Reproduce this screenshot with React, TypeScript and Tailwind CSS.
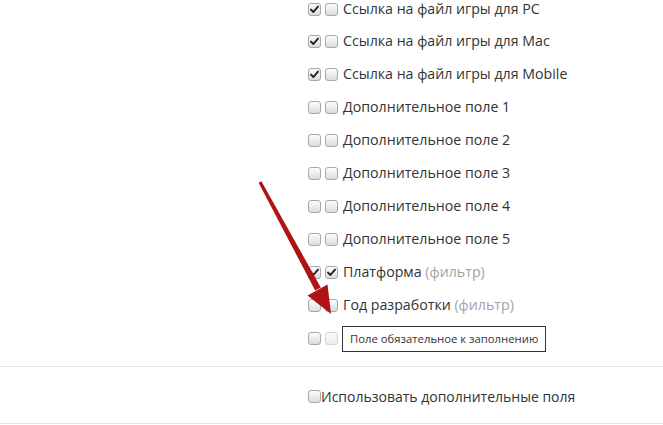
import React from "react";

function Box({ checked = false, light = false }: { checked?: boolean; light?: boolean }) {
  return (
    <span
      className={
        "relative inline-flex h-[13px] w-[13px] shrink-0 items-center justify-center rounded-[3px] border " +
        (light
          ? "border-[#d4d4d4] bg-gradient-to-b from-[#fafafa] to-[#ececec]"
          : "border-[#a8a8a8] bg-gradient-to-b from-[#fdfdfd] to-[#dcdcdc]")
      }
    >
      {checked && (
        <svg width="9" height="9" viewBox="0 0 9 9">
          <path d="M1 4.6 L3.4 7 L8 1.6" fill="none" stroke="#222" strokeWidth="1.9" strokeLinecap="round" strokeLinejoin="round" />
        </svg>
      )}
    </span>
  );
}

const rows: { a: boolean; b: boolean; label: string; filter?: boolean }[] = [
  { a: true, b: false, label: "Ссылка на файл игры для PC" },
  { a: true, b: false, label: "Ссылка на файл игры для Mac" },
  { a: true, b: false, label: "Ссылка на файл игры для Mobile" },
  { a: false, b: false, label: "Дополнительное поле 1" },
  { a: false, b: false, label: "Дополнительное поле 2" },
  { a: false, b: false, label: "Дополнительное поле 3" },
  { a: false, b: false, label: "Дополнительное поле 4" },
  { a: false, b: false, label: "Дополнительное поле 5" },
  { a: true, b: true, label: "Платформа", filter: true },
  { a: false, b: false, label: "Год разработки", filter: true },
];

export default function App() {
  return (
    <div
      className="relative h-[425px] w-[663px] overflow-hidden bg-white text-[#333]"
      style={{ fontFamily: '"Open Sans", "Liberation Sans", sans-serif' }}
    >
      <div className="flex flex-col pl-[308px]">
        {rows.map((r, i) => (
          <div
            key={i}
            className={"flex items-center " + (i === 0 ? "h-[25px] pb-[7px]" : "h-[33px]")}
          >
            <Box checked={r.a} />
            <span className="w-[4px]" />
            <Box checked={r.b} />
            <span className="ml-[5px] text-[14.2px] leading-none">
              {r.label}
              {r.filter && <span className="text-[#a3a3a3]"> (фильтр)</span>}
            </span>
          </div>
        ))}
        <div className="flex h-[33px] items-center">
          <Box />
          <span className="w-[4px]" />
          <Box light />
          <span className="ml-[4px] flex h-[26px] items-center border border-[#333] px-[7px] text-[11.3px] leading-none">
            Поле обязательное к заполнению
          </span>
        </div>
      </div>
      <div className="mt-[11px] h-px bg-[#e2e2e2]" />
      <div className="flex h-[56px] items-center pl-[308px] pt-[3px]">
        <Box />
        <span className="text-[14px] leading-none">Использовать дополнительные поля</span>
      </div>
      <div className="h-px bg-[#e2e2e2]" />

      <svg className="pointer-events-none absolute left-0 top-0" width="663" height="425">
        <polygon points="258.6,182.7 261.4,181.3 320.8,287.4 315.2,290.6" fill="#b01313" />
        <polygon points="331,314 307.5,295.5 327.5,284.5" fill="#b01313" />
      </svg>
    </div>
  );
}
